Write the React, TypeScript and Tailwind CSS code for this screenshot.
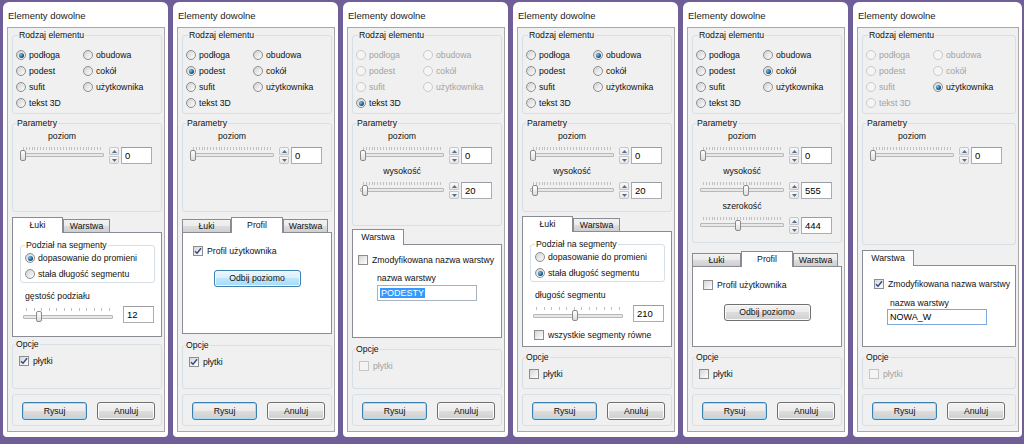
import React from "react";

type SliderDef = { label: string; value: string; pos: number };
type Tab = { name: string; w: string };

type PanelDef = {
  ow: string;
  selected: string;
  lockOthers: boolean;
  sliders: SliderDef[];
  paramsH: string;
  tabsGap: string;
  tabs: Tab[];
  active: string;
  contentH: string;
  content: React.ReactNode;
  opcjeGap: string;
  plytki: boolean;
  plytkiOff: boolean;
};

const RADIOS = ["podłoga", "obudowa", "podest", "cokół", "sufit", "użytkownika", "tekst 3D"];

const grayFill = "bg-[linear-gradient(#f2f2f2,#ebebeb_49%,#dddddd_50%,#cfcfcf)]";

function Radio({ label, checked, disabled }: { label: string; checked?: boolean; disabled?: boolean }) {
  return (
    <div className="flex h-[16px] items-center gap-[3px]">
      <span
        className={`flex h-[10px] w-[10px] shrink-0 items-center justify-center rounded-full border ${
          disabled ? "border-[#cacaca] bg-[#f5f5f5]" : "border-[#8b8d8f] bg-[linear-gradient(135deg,#d2d2d2,#fdfdfd)]"
        }`}
      >
        {checked && (
          <span className="h-[5px] w-[5px] rounded-full bg-[radial-gradient(circle_at_35%_35%,#7cc4ea,#17578c_60%,#0c3660)]" />
        )}
      </span>
      <span className={disabled ? "text-[#a3a3a3]" : "text-[#111]"}>{label}</span>
    </div>
  );
}

function Check({ label, checked, disabled }: { label: string; checked?: boolean; disabled?: boolean }) {
  return (
    <div className="flex h-[12px] items-center gap-[4px]">
      <span
        className={`flex h-[10px] w-[10px] shrink-0 items-center justify-center border ${
          disabled ? "border-[#c6c6c6] bg-[#f4f4f4]" : "border-[#8b8d8f] bg-[linear-gradient(135deg,#d6d6d6,#ffffff)]"
        }`}
      >
        {checked && (
          <svg viewBox="0 0 10 10" className="h-[8px] w-[8px]">
            <path d="M1.2 5.2 3.8 7.8 8.8 1.6" fill="none" stroke="#34478a" strokeWidth="1.8" />
          </svg>
        )}
      </span>
      <span className={disabled ? "text-[#a3a3a3]" : "text-[#111]"}>{label}</span>
    </div>
  );
}

function Slider({ w, ticks, pos, tab }: { w: string; ticks: number; pos: number; tab?: boolean }) {
  return (
    <div className={`relative h-[17px] shrink-0 ${w}`}>
      <div className={`flex h-[3px] justify-between px-[3px] ${tab ? "mt-[2px]" : ""}`}>
        {Array.from({ length: ticks }).map((_, i) => (
          <span key={i} className="h-[3px] w-px bg-[#c0c0c0]" />
        ))}
      </div>
      <div className={`h-[4px] rounded-[1px] border border-[#b8b8b8] bg-[#e8e8e8] ${tab ? "mt-[4px]" : "mt-[3px]"}`} />
      <span
        className={`absolute h-[11px] w-[6px] rounded-[2px] border border-[#8a8a8a] bg-[linear-gradient(#ffffff,#dcdcdc)] ${
          tab ? "top-[5px]" : "top-[3px]"
        }`}
        style={{ left: `calc(${pos} * (100% - 6px))` }}
      />
    </div>
  );
}

function Spin() {
  return (
    <div className="flex h-[17px] w-[10px] shrink-0 flex-col gap-px">
      {[0, 1].map((i) => (
        <span
          key={i}
          className={`flex flex-1 items-center justify-center border border-[#c3c7cc] bg-[linear-gradient(#f9f9f9,#e6e6e6)] ${
            i === 0 ? "rounded-t-[2px]" : "rounded-b-[2px]"
          }`}
        >
          <svg viewBox="0 0 5 3" className="h-[3px] w-[5px]">
            <path d={i === 0 ? "M0 3 2.5 0 5 3Z" : "M0 0 2.5 3 5 0Z"} fill="#5a6b8c" />
          </svg>
        </span>
      ))}
    </div>
  );
}

function Field({ value }: { value: string }) {
  return (
    <div className="h-[17px] w-[31px] shrink-0 border border-[#abadb3] border-t-[#9a9da5] bg-white pl-[3px] text-[9.5px] leading-[15px] text-black">
      {value}
    </div>
  );
}

function Group({
  label,
  lx,
  className,
  labelBg = "bg-[#f0f0f0]",
  children,
}: {
  label: string;
  lx: string;
  className: string;
  labelBg?: string;
  children: React.ReactNode;
}) {
  return (
    <div className={`relative rounded-[3px] border border-[#d5dfe5] ${className}`}>
      <span className={`absolute top-[-7px] px-[1px] leading-[12px] text-[#111] ${lx} ${labelBg}`}>{label}</span>
      {children}
    </div>
  );
}

function Btn({ children, w, kind }: { children: React.ReactNode; w: string; kind?: "def" | "hot" }) {
  const look =
    kind === "def"
      ? `border-[#3c7fb1] shadow-[inset_0_0_0_1px_#a6dcf7] ${grayFill}`
      : kind === "hot"
      ? "border-[#3c7fb1] shadow-[inset_0_0_0_1px_#f2fafe] bg-[linear-gradient(#eaf6fd,#d9f0fc_49%,#bee6fd_50%,#a7d9f5)]"
      : `border-[#707070] shadow-[inset_0_0_0_1px_#fbfbfb] ${grayFill}`;
  return (
    <div className={`flex shrink-0 items-center justify-center rounded-[3px] border text-[#111] ${w} ${look}`}>
      {children}
    </div>
  );
}

function Tabs({ tabs, active, h, children }: { tabs: Tab[]; active: string; h: string; children: React.ReactNode }) {
  return (
    <div className="ml-[4px] mr-[2px] flex flex-col">
      <div className="flex h-[15px] items-end">
        {tabs.map((t) =>
          t.name === active ? (
            <div
              key={t.name}
              className={`relative z-10 -mb-px flex h-[16px] items-center justify-center border border-b-0 border-[#898c95] bg-white pb-[1px] ${t.w}`}
            >
              {t.name}
            </div>
          ) : (
            <div
              key={t.name}
              className={`flex h-[13px] items-center justify-center border border-b-0 border-[#898c95] ${grayFill} ${t.w}`}
            >
              {t.name}
            </div>
          )
        )}
      </div>
      <div className={`border border-[#898c95] bg-white ${h}`}>{children}</div>
    </div>
  );
}

function Luki({ first }: { first: boolean }) {
  return (
    <div className="flex flex-col">
      <Group
        label="Podział na segmenty"
        lx="left-[4px]"
        labelBg="bg-white"
        className="ml-[7px] mr-[6px] mt-[12px] h-[38px] pl-[4px] pt-[4px]"
      >
        <Radio label="dopasowanie do promieni" checked={first} />
        <Radio label="stała długość segmentu" checked={!first} />
      </Group>
      <div className="mt-[8px] h-[11px] pl-[12px] leading-[11px]">
        {first ? "gęstość podziału" : "długość segmentu"}
      </div>
      <div className="mt-[4px] flex items-start pl-[10px]">
        <Slider w="w-[90px]" ticks={12} pos={first ? 0.16 : 0.47} tab />
        <div className="ml-[10px]">
          <Field value={first ? "12" : "210"} />
        </div>
      </div>
      {!first && (
        <div className="mt-[7px] pl-[11px]">
          <Check label="wszystkie segmenty równe" />
        </div>
      )}
    </div>
  );
}

function Profil({ checked, hot }: { checked: boolean; hot: boolean }) {
  return (
    <div className="flex flex-col">
      <div className="mt-[12px] pl-[10px]">
        <Check label="Profil użytkownika" checked={checked} />
      </div>
      <div className="mt-[13px] flex justify-center">
        <Btn kind={hot ? "hot" : undefined} w="h-[17px] w-[87px]">
          Odbij poziomo
        </Btn>
      </div>
    </div>
  );
}

function Warstwa({ p3 }: { p3: boolean }) {
  return (
    <div className="flex flex-col">
      <div className={p3 ? "mt-[9px] pl-[5px]" : "mt-[12px] pl-[11px]"}>
        <Check label="Zmodyfikowana nazwa warstwy" checked={!p3} />
      </div>
      <div className={`h-[11px] leading-[11px] ${p3 ? "mt-[7px] pl-[24px]" : "mt-[8px] pl-[27px]"}`}>nazwa warstwy</div>
      <div
        className={`h-[16px] w-[100px] border bg-white pl-[2px] text-[9px] leading-[14px] ${
          p3 ? "ml-[24px] mt-[1px] border-[#a9b3c0]" : "ml-[24px] border-[#7fa9dc]"
        }`}
      >
        {p3 ? <span className="bg-[#3399ff] px-px text-white">PODESTY</span> : <span className="text-black">NOWA_W</span>}
      </div>
    </div>
  );
}

const lukiTabs: Tab[] = [
  { name: "Łuki", w: "w-[51px]" },
  { name: "Warstwa", w: "w-[47px]" },
];
const profilTabs: Tab[] = [
  { name: "Łuki", w: "w-[49px]" },
  { name: "Profil", w: "w-[52px]" },
  { name: "Warstwa", w: "w-[45px]" },
];
const warstwaTabs: Tab[] = [{ name: "Warstwa", w: "w-[52px]" }];

const panels: PanelDef[] = [
  {
    ow: "w-[170px]",
    selected: "podłoga",
    lockOthers: false,
    sliders: [{ label: "poziom", value: "0", pos: 0 }],
    paramsH: "h-[89px]",
    tabsGap: "mt-[5px]",
    tabs: lukiTabs,
    active: "Łuki",
    contentH: "h-[105px]",
    content: <Luki first />,
    opcjeGap: "mt-[7px]",
    plytki: true,
    plytkiOff: false,
  },
  {
    ow: "w-[170px]",
    selected: "podest",
    lockOthers: false,
    sliders: [{ label: "poziom", value: "0", pos: 0 }],
    paramsH: "h-[89px]",
    tabsGap: "mt-[5px]",
    tabs: profilTabs,
    active: "Profil",
    contentH: "h-[102px]",
    content: <Profil checked hot />,
    opcjeGap: "mt-[11px]",
    plytki: true,
    plytkiOff: false,
  },
  {
    ow: "w-[170px]",
    selected: "tekst 3D",
    lockOthers: true,
    sliders: [
      { label: "poziom", value: "0", pos: 0 },
      { label: "wysokość", value: "20", pos: 0.02 },
    ],
    paramsH: "h-[103px]",
    tabsGap: "mt-[3px]",
    tabs: warstwaTabs,
    active: "Warstwa",
    contentH: "h-[94px]",
    content: <Warstwa p3 />,
    opcjeGap: "mt-[11px]",
    plytki: false,
    plytkiOff: true,
  },
  {
    ow: "w-[170px]",
    selected: "obudowa",
    lockOthers: false,
    sliders: [
      { label: "poziom", value: "0", pos: 0 },
      { label: "wysokość", value: "20", pos: 0.02 },
    ],
    paramsH: "h-[89px]",
    tabsGap: "mt-[4px]",
    tabs: lukiTabs,
    active: "Łuki",
    contentH: "h-[116px]",
    content: <Luki first={false} />,
    opcjeGap: "mt-[10px]",
    plytki: false,
    plytkiOff: false,
  },
  {
    ow: "w-[170px]",
    selected: "cokół",
    lockOthers: false,
    sliders: [
      { label: "poziom", value: "0", pos: 0 },
      { label: "wysokość", value: "555", pos: 0.55 },
      { label: "szerokość", value: "444", pos: 0.45 },
    ],
    paramsH: "h-[120px]",
    tabsGap: "mt-[8px]",
    tabs: profilTabs,
    active: "Profil",
    contentH: "h-[81px]",
    content: <Profil checked={false} hot={false} />,
    opcjeGap: "mt-[10px]",
    plytki: false,
    plytkiOff: false,
  },
  {
    ow: "w-[174px]",
    selected: "użytkownika",
    lockOthers: true,
    sliders: [{ label: "poziom", value: "0", pos: 0 }],
    paramsH: "h-[122px]",
    tabsGap: "mt-[5px]",
    tabs: warstwaTabs,
    active: "Warstwa",
    contentH: "h-[82px]",
    content: <Warstwa p3={false} />,
    opcjeGap: "mt-[10px]",
    plytki: false,
    plytkiOff: true,
  },
];

function Panel({ p }: { p: PanelDef }) {
  return (
    <div className={`${p.ow} h-[444px] shrink-0 pb-[7px] pl-[3px] pr-[2px] pt-[2px]`}>
      <div className="flex h-full flex-col rounded-b-[4px] rounded-t-[6px] bg-white">
        <div className="flex h-[25px] shrink-0 items-center pl-[5px] pt-[1px] text-[9.5px] text-[#1b1b1b]">
          Elementy dowolne
        </div>
        <div className="ml-[4px] mr-[3px] flex h-[405px] shrink-0 flex-col border border-[#a8a8a8] bg-[#f0f0f0]">
          <Group label="Rodzaj elementu" lx="left-[5px]" className="ml-[4px] mr-[2px] mt-[7px] h-[79px] shrink-0 pl-[3px] pt-[11px]">
            <div className="grid grid-cols-[67px_1fr]">
              {RADIOS.map((r) => (
                <Radio key={r} label={r} checked={r === p.selected} disabled={p.lockOthers && r !== p.selected} />
              ))}
            </div>
          </Group>
          <Group label="Parametry" lx="left-[3px]" className={`ml-[4px] mr-[2px] mt-[9px] shrink-0 pl-[7px] pt-[7px] ${p.paramsH}`}>
            {p.sliders.map((s, i) => (
              <div key={s.label} className={i ? "mt-[2px]" : ""}>
                <div className="h-[11px] w-[84px] text-center leading-[11px]">{s.label}</div>
                <div className="mt-[5px] flex items-start">
                  <Slider w="w-[84px]" ticks={28} pos={s.pos} />
                  <div className="ml-[5px]">
                    <Spin />
                  </div>
                  <div className="ml-[2px]">
                    <Field value={s.value} />
                  </div>
                </div>
              </div>
            ))}
          </Group>
          <div className={`shrink-0 ${p.tabsGap}`}>
            <Tabs tabs={p.tabs} active={p.active} h={p.contentH}>
              {p.content}
            </Tabs>
          </div>
          <Group label="Opcje" lx="left-[2px]" className={`mb-[5px] ml-[4px] mr-[2px] flex-1 pl-[6px] pt-[10px] ${p.opcjeGap}`}>
            <Check label="płytki" checked={p.plytki} disabled={p.plytkiOff} />
          </Group>
          <div className="mb-[5px] ml-[4px] mr-[2px] flex h-[32px] shrink-0 gap-[10px] rounded-[3px] border border-[#d5dfe5] pl-[9px] pt-[7px]">
            <Btn kind="def" w="h-[18px] w-[65px]">
              Rysuj
            </Btn>
            <Btn w="h-[18px] w-[58px]">Anuluj</Btn>
          </div>
        </div>
      </div>
    </div>
  );
}

export default function App() {
  return (
    <div className="flex h-[444px] w-[1024px] overflow-hidden bg-[#6f5e98] font-['Liberation_Sans',Arial,sans-serif] text-[8.7px] leading-[11px] text-[#111]">
      {panels.map((p, i) => (
        <Panel key={i} p={p} />
      ))}
    </div>
  );
}
